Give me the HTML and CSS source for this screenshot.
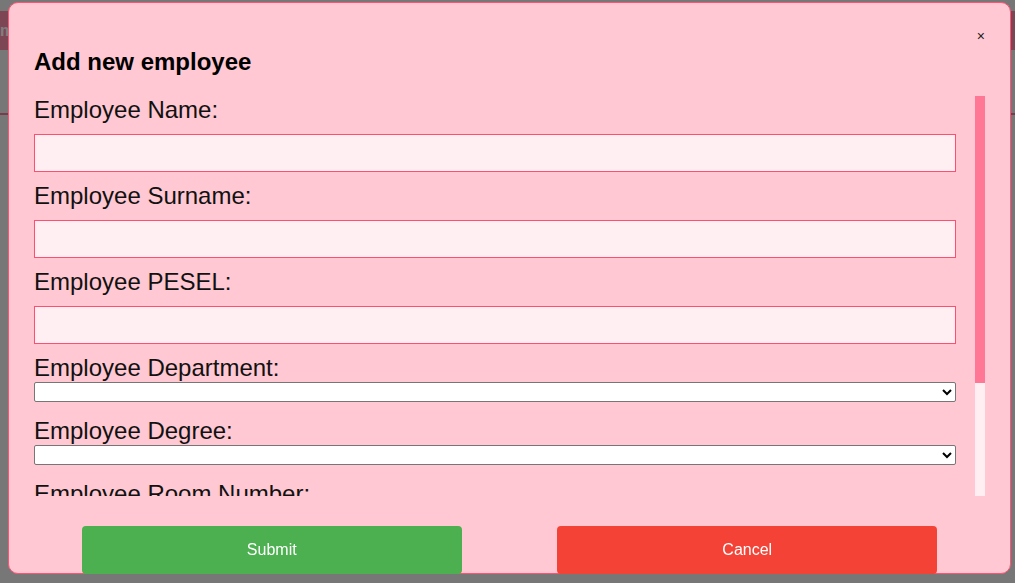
FILE: index.html
```html
<!DOCTYPE html>
<html lang="en">
<head>
<meta charset="utf-8">
<title>Add new employee</title>
<link rel="stylesheet" href="styles.css">
</head>
<body>
<div class="page">
  <header class="topbar"><span class="brand">management</span></header>
  <nav class="nav"><a class="navlink" href="#">t</a></nav>
  <div class="rule"></div>
</div>
<div class="overlay">
  <div class="modal">
    <button class="close" type="button">&times;</button>
    <h2 class="title">Add new employee</h2>
    <div class="scrollarea">
      <form class="fields">
        <label class="label">Employee Name:</label>
        <input class="field" type="text">
        <label class="label">Employee Surname:</label>
        <input class="field" type="text">
        <label class="label">Employee PESEL:</label>
        <input class="field" type="text">
        <label class="label">Employee Department:</label>
        <select class="choice"><option></option></select>
        <label class="label">Employee Degree:</label>
        <select class="choice"><option></option></select>
        <label class="label">Employee Room Number:</label>
        <input class="field" type="text">
        <label class="label">Employee Email:</label>
        <input class="field" type="text">
      </form>
      <div class="scrolltrack"><div class="scrollthumb"></div></div>
    </div>
    <div class="actions">
      <button class="btn submit" type="button">Submit</button>
      <button class="btn cancel" type="button">Cancel</button>
    </div>
  </div>
</div>
</body>
</html>
```

FILE: styles.css
```css
html, body {
  margin: 0;
  padding: 0;
}
body {
  font-family: "Liberation Sans", Arial, sans-serif;
  background: #efefef;
  overflow: hidden;
}
.page {
  height: 583px;
  background: #efefef;
}
.topbar {
  margin-top: 11px;
  height: 39px;
  background: #fa8caa;
  display: flex;
  align-items: center;
}
.brand {
  color: #ffffff;
  font-weight: bold;
  font-size: 16px;
}
.nav {
  height: 63px;
  display: flex;
  align-items: center;
}
.navlink {
  color: #1a55c8;
  font-size: 13px;
  text-decoration: none;
  margin-left: -4px;
}
.rule {
  height: 2px;
  background: #f07898;
}
.overlay {
  position: fixed;
  inset: 0;
  background: rgba(0, 0, 0, 0.5);
}
.modal {
  position: relative;
  box-sizing: border-box;
  margin: 2px 0 0 8px;
  width: 1003px;
  height: 572px;
  padding: 25px 25px 0 25px;
  background: #ffc8d2;
  border: 1px solid #ff5274;
  border-radius: 10px;
}
.close {
  position: absolute;
  top: 26px;
  right: 25px;
  padding: 0;
  border: none;
  background: transparent;
  font-family: "Liberation Sans", Arial, sans-serif;
  font-size: 14px;
  line-height: 14px;
  color: #222;
  cursor: pointer;
}
.title {
  margin: 20px 0 20px 0;
  font-size: 24px;
  line-height: 28px;
  font-weight: bold;
  color: #000;
}
.scrollarea {
  display: flex;
  height: 400px;
}
.fields {
  flex: 1;
  min-width: 0;
  display: flex;
  flex-direction: column;
  align-items: flex-start;
  overflow: hidden;
  margin: 0;
}
.scrolltrack {
  flex: none;
  width: 10px;
  height: 400px;
  background: #ffeef2;
}
.scrollthumb {
  height: 287px;
  background: #ff7794;
}
.label {
  display: block;
  flex: none;
  font-size: 24px;
  line-height: 27px;
  height: 27px;
  color: #111;
}
.field {
  flex: none;
  box-sizing: border-box;
  width: 98%;
  height: 38px;
  margin: 11px 0 10px 0;
  border: 1px solid #ff4f70;
  background: #ffeff3;
  font-family: "Liberation Sans", Arial, sans-serif;
  font-size: 16px;
  outline: none;
}
.choice {
  flex: none;
  box-sizing: border-box;
  width: 98%;
  height: 20px;
  margin: 1px 0 15px 0;
  background: #ffffff;
  border: 1px solid #767676;
  border-radius: 2px;
  font-size: 13px;
}
.actions {
  display: flex;
  justify-content: space-around;
  margin-top: 30px;
}
.btn {
  width: 40%;
  height: 48px;
  border: none;
  border-radius: 4px;
  color: #ffffff;
  font-family: "Liberation Sans", Arial, sans-serif;
  font-size: 16px;
  cursor: pointer;
}
.submit {
  background: #4caf50;
}
.cancel {
  background: #f44336;
}
```
